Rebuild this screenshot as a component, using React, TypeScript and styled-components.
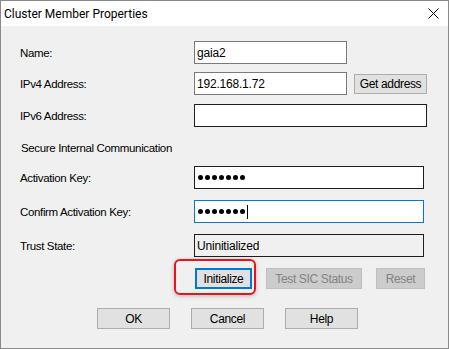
import React from "react";
import styled, { createGlobalStyle, css } from "styled-components";

const GlobalStyle = createGlobalStyle`
  html, body {
    margin: 0;
    padding: 0;
    background: #ffffff;
  }
  * {
    box-sizing: border-box;
  }
`;

const Window = styled.div`
  position: relative;
  width: 449px;
  height: 349px;
  border: 1px solid #8a8a8a;
  background: #f0f0f0;
  font-family: "Liberation Sans", Arial, sans-serif;
  font-size: 11.5px;
  letter-spacing: -0.35px;
  color: #000;
  display: flex;
  flex-direction: column;
  overflow: hidden;
`;

const TitleBar = styled.div`
  height: 25px;
  background: #ffffff;
  display: flex;
  align-items: center;
  justify-content: space-between;
  padding: 0 0 0 3px;
  flex-shrink: 0;
`;

const Title = styled.div`
  font-family: Roboto, "Noto Sans", sans-serif;
  font-size: 12px;
  letter-spacing: 0;
  color: #000;
`;

const CloseBtn = styled.div`
  width: 30px;
  height: 25px;
  display: flex;
  align-items: center;
  justify-content: center;
`;

const Body = styled.div`
  padding: 15px 0 0 19px;
  display: flex;
  flex-direction: column;
`;

const Row = styled.div<{ $gap?: number }>`
  display: grid;
  grid-template-columns: 174px auto;
  align-items: center;
  height: 23px;
  margin-bottom: ${(p) => p.$gap ?? 0}px;
`;

const Label = styled.div`
  white-space: nowrap;
`;

const FieldLine = styled.div`
  display: flex;
  align-items: center;
  gap: 7px;
`;

type FieldTone = "grey" | "dark" | "focus" | "readonly";

const Field = styled.div<{ $w: number; $tone: FieldTone }>`
  width: ${(p) => p.$w}px;
  height: 23px;
  border: 1px solid #7a7a7a;
  background: #ffffff;
  padding: 0 2px;
  display: flex;
  align-items: center;
  white-space: nowrap;
  font-size: 12px;
  letter-spacing: -0.2px;
  ${(p) =>
    p.$tone === "dark" &&
    css`
      border-color: #1e1e1e;
    `}
  ${(p) =>
    p.$tone === "focus" &&
    css`
      border-color: #0078d7;
    `}
  ${(p) =>
    p.$tone === "readonly" &&
    css`
      border-color: #1e1e1e;
      background: #f0f0f0;
    `}
`;

const Dots = styled.div`
  display: flex;
  gap: 2px;
  padding-left: 1px;
`;

const Dot = styled.span`
  width: 5px;
  height: 5px;
  border-radius: 50%;
  background: #000;
`;

const Caret = styled.span`
  display: inline-block;
  width: 1px;
  height: 14px;
  background: #000;
  margin-left: 2px;
`;

const Heading = styled.div`
  line-height: 13px;
  margin: 15px 0 11px 1px;
`;

const Button = styled.div<{ $w: number; $disabled?: boolean; $focus?: boolean }>`
  width: ${(p) => p.$w}px;
  height: 21px;
  background: #e1e1e1;
  border: 1px solid #adadad;
  display: flex;
  align-items: center;
  justify-content: center;
  font-size: 12px;
  color: #000;
  ${(p) =>
    p.$disabled &&
    css`
      background: #cccccc;
      border-color: #bfbfbf;
      color: #838383;
    `}
  ${(p) =>
    p.$focus &&
    css`
      border: 2px solid #0078d7;
    `}
`;

const SmallButton = styled(Button)`
  height: 20px;
`;

const ActionRow = styled.div`
  display: flex;
  justify-content: space-between;
  width: 230px;
  margin: 11px 0 0 175px;
`;

const ButtonCell = styled.div`
  position: relative;
`;

const Highlight = styled.div`
  position: absolute;
  left: -21px;
  top: -9px;
  width: 82px;
  height: 36px;
  border: 2px solid #e8131b;
  border-radius: 6px;
  box-shadow: 0 1px 4px rgba(0, 0, 0, 0.25);
  pointer-events: none;
`;

const FooterRow = styled.div`
  display: flex;
  gap: 21px;
  margin: 19px 0 0 77px;
`;

const PasswordDots: React.FC<{ count: number }> = ({ count }) => (
  <Dots>
    {Array.from({ length: count }).map((_, i) => (
      <Dot key={i} />
    ))}
  </Dots>
);

export default function App() {
  return (
    <>
      <GlobalStyle />
      <Window>
        <TitleBar>
          <Title>Cluster Member Properties</Title>
          <CloseBtn>
            <svg width="11" height="11" viewBox="0 0 11 11">
              <path d="M0.5 0.5 L10.5 10.5 M10.5 0.5 L0.5 10.5" stroke="#000" strokeWidth="1" />
            </svg>
          </CloseBtn>
        </TitleBar>
        <Body>
          <Row $gap={8}>
            <Label>Name:</Label>
            <Field $w={153} $tone="grey">gaia2</Field>
          </Row>
          <Row $gap={9}>
            <Label>IPv4 Address:</Label>
            <FieldLine>
              <Field $w={153} $tone="grey">192.168.1.72</Field>
              <SmallButton $w={73}>Get address</SmallButton>
            </FieldLine>
          </Row>
          <Row>
            <Label>IPv6 Address:</Label>
            <Field $w={233} $tone="dark" />
          </Row>
          <Heading>Secure Internal Communication</Heading>
          <Row $gap={11}>
            <Label>Activation Key:</Label>
            <Field $w={230} $tone="dark">
              <PasswordDots count={7} />
            </Field>
          </Row>
          <Row $gap={11}>
            <Label>Confirm Activation Key:</Label>
            <Field $w={230} $tone="focus">
              <PasswordDots count={7} />
              <Caret />
            </Field>
          </Row>
          <Row>
            <Label>Trust State:</Label>
            <Field $w={230} $tone="readonly">Uninitialized</Field>
          </Row>
          <ActionRow>
            <ButtonCell>
              <Button $w={57} $focus>Initialize</Button>
              <Highlight />
            </ButtonCell>
            <Button $w={96} $disabled>Test SIC Status</Button>
            <Button $w={49} $disabled>Reset</Button>
          </ActionRow>
          <FooterRow>
            <Button $w={73}>OK</Button>
            <Button $w={73}>Cancel</Button>
            <Button $w={73}>Help</Button>
          </FooterRow>
        </Body>
      </Window>
    </>
  );
}
